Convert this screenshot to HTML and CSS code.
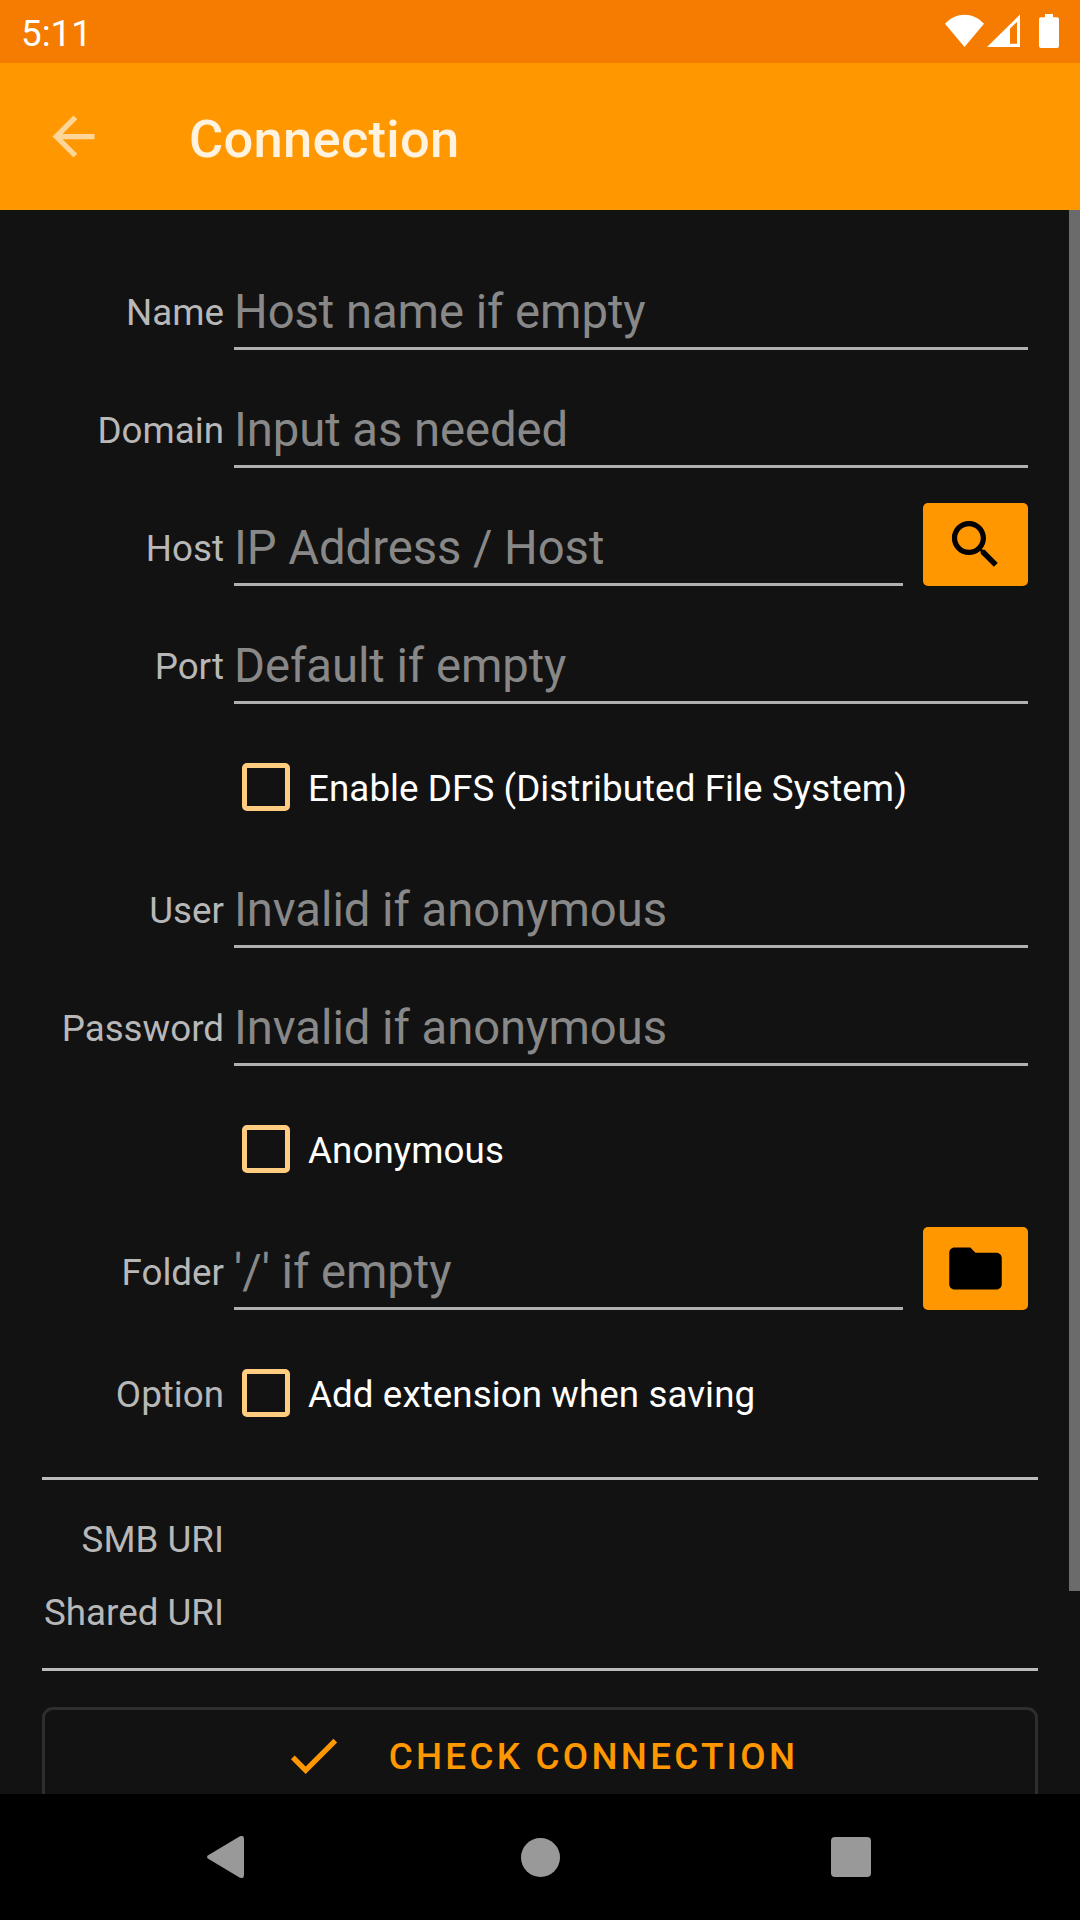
FILE: index.html
```html
<!DOCTYPE html>
<html lang="en">
<head>
<meta charset="utf-8">
<title>Connection</title>
<link rel="stylesheet" href="styles.css">
</head>
<body>
<div class="screen">
  <header class="status-bar">
    <span class="clock">5:11</span>
    <svg class="status-icons" viewBox="0 0 120 36" width="120" height="36">
      <path d="M0 9.7C11 -2.3 28 -2.3 39 9.7L19.5 33Z"/>
      <path fill-rule="evenodd" d="M42 33L75 .5V33ZM65 14.6V29.8H72V8Z"/>
      <path d="M100 0h8v3.3h4a2 2 0 0 1 2 2V32a2 2 0 0 1-2 2H96a2 2 0 0 1-2-2V5.300a2 2 0 0 1 2-2h4z"/>
    </svg>
  </header>
  <div class="app-bar">
    <svg class="icon back" viewBox="0 0 24 24"><path d="M20 11H7.830l5.590-5.590L12 4l-8 8 8 8 1.410-1.410L7.830 13H20v-2z"/></svg>
    <h1 class="title">Connection</h1>
  </div>
  <main class="content">
    <div class="row"><span class="label">Name</span><div class="field">Host name if empty</div></div>
    <div class="row"><span class="label">Domain</span><div class="field">Input as needed</div></div>
    <div class="row"><span class="label">Host</span><div class="field">IP Address / Host</div>
      <div class="button"><svg class="icon" viewBox="0 0 24 24"><path d="M15.500 14h-.79l-.28-.27C15.410 12.590 16 11.110 16 9.500 16 5.910 13.090 3 9.500 3S3 5.910 3 9.500 5.910 16 9.500 16c1.610 0 3.090-.59 4.230-1.570l.27.28v.79l5 4.990L20.490 19l-4.990-5zm-6 0C7.010 14 5 11.990 5 9.500S7.010 5 9.500 5 14 7.010 14 9.500 11.990 14 9.500 14z"/></svg></div>
    </div>
    <div class="row"><span class="label">Port</span><div class="field">Default if empty</div></div>
    <div class="row check-row"><span class="label"></span><span class="box"></span><span class="check-text">Enable DFS (Distributed File System)</span></div>
    <div class="row"><span class="label">User</span><div class="field">Invalid if anonymous</div></div>
    <div class="row"><span class="label">Password</span><div class="field">Invalid if anonymous</div></div>
    <div class="row check-row"><span class="label"></span><span class="box"></span><span class="check-text">Anonymous</span></div>
    <div class="row"><span class="label">Folder</span><div class="field">'/' if empty</div>
      <div class="button"><svg class="icon" viewBox="0 0 24 24"><path d="M10 4H4c-1.100 0-1.990.9-1.990 2L2 18c0 1.100.9 2 2 2h16c1.100 0 2-.9 2-2V8c0-1.100-.9-2-2-2h-8l-2-2z"/></svg></div>
    </div>
    <div class="row check-row"><span class="label">Option</span><span class="box"></span><span class="check-text">Add extension when saving</span></div>
    <section class="uris">
      <span class="label">SMB URI</span>
      <span class="label">Shared URI</span>
    </section>
    <div class="check-button">
      <svg class="icon" viewBox="0 0 24 24"><path d="M9 16.170L4.830 12l-1.420 1.410L9 19 21 7l-1.410-1.410z"/></svg>
      <span>CHECK CONNECTION</span>
    </div>
    <div class="scrollbar"></div>
  </main>
  <nav class="nav-bar">
    <svg viewBox="0 0 37 42" width="37" height="42"><path d="M1.200 19.200L32.500.5Q37-1.500 37 3V39Q37 43.500 32.500 41.500L1.200 22.800Q-1.200 21 1.200 19.200Z"/></svg>
    <span class="home"></span>
    <span class="recents"></span>
  </nav>
</div>
</body>
</html>
```

FILE: styles.css
```css
* { box-sizing: border-box; }
body { margin: 0; background: #000; font-family: Roboto, sans-serif; }
.screen {
  width: 1080px; height: 1920px; overflow: hidden;
  display: flex; flex-direction: column;
}
.icon { width: 63px; height: 63px; flex: none; fill: currentColor; }

.status-bar {
  height: 63px; flex: none; padding: 0 15px 0 21px;
  display: flex; justify-content: space-between; align-items: flex-start;
  background: #f57c00; color: #fff;
}
.clock { font-size: 36.75px; line-height: 67px; }
.status-icons { margin-top: 14px; fill: #fff; }

.app-bar {
  height: 147px; flex: none; padding-left: 42px;
  display: flex; align-items: center; gap: 84px;
  background: #ff9800;
}
.back { color: rgba(255, 255, 255, .6); }
.title {
  margin: 4px 0 0; font-size: 52.5px; font-weight: 500; line-height: 60px; letter-spacing: .25px;
  color: rgba(255, 255, 255, .87);
}

.content {
  position: relative; flex: 1; min-height: 0; overflow: hidden;
  padding: 31px 42px 0; background: #121212;
}
.row { display: flex; align-items: flex-end; height: 118px; padding: 0 10px 9px 0; }
.label {
  width: 182px; flex: none; margin-right: 10px;
  font-size: 36.75px; line-height: 78px; height: 76px; text-align: right; white-space: nowrap;
  color: #b8b8b8;
}
.field {
  flex: 1; height: 76px; border-bottom: 3px solid #b0b0b0;
  font-size: 47.25px; line-height: 76px; letter-spacing: -.06px; white-space: nowrap; color: #888;
}
.button {
  width: 105px; height: 83px; flex: none; margin-left: 20px;
  display: flex; align-items: center; justify-content: center;
  border-radius: 5px; background: #ff9800; color: #000;
}
.check-row { height: 126px; padding: 50px 0 0; align-items: flex-start; }
.check-row .label { height: 50px; line-height: 52px; }
.box {
  width: 48px; height: 48px; flex: none; margin: 0 18px 0 8px;
  border: 5.25px solid #ffcc80; border-radius: 5px;
}
.check-text { font-size: 36.75px; line-height: 52px; letter-spacing: .07px; white-space: nowrap; color: #fff; }

.uris {
  height: 194px; margin-top: 32px; padding-top: 22px;
  display: flex; flex-direction: column;
  border-top: 3px solid #bbb; border-bottom: 3px solid #bbb;
}
.uris .label { height: 73px; line-height: 75px; }
.check-button {
  height: 99px; margin-top: 36px; border: 3px solid #2e2e2e; border-radius: 11px;
  display: flex; align-items: center; justify-content: center; gap: 44px;
  font-size: 36.75px; font-weight: 500; letter-spacing: 3.28px; color: #ff9800;
}
.check-button .icon { margin-bottom: 3px; }
.scrollbar { position: absolute; top: 0; right: 0; width: 11px; height: 1381px; background: #6b6b6b; }

.nav-bar {
  height: 126px; flex: none; padding: 0 209px 0 207px;
  display: flex; align-items: center; justify-content: space-between;
  background: #000; fill: #999;
}
.home { width: 39px; height: 39px; border-radius: 50%; background: #999; margin-left: 5px; }
.recents { width: 40px; height: 40px; border-radius: 4px; background: #999; }
```
